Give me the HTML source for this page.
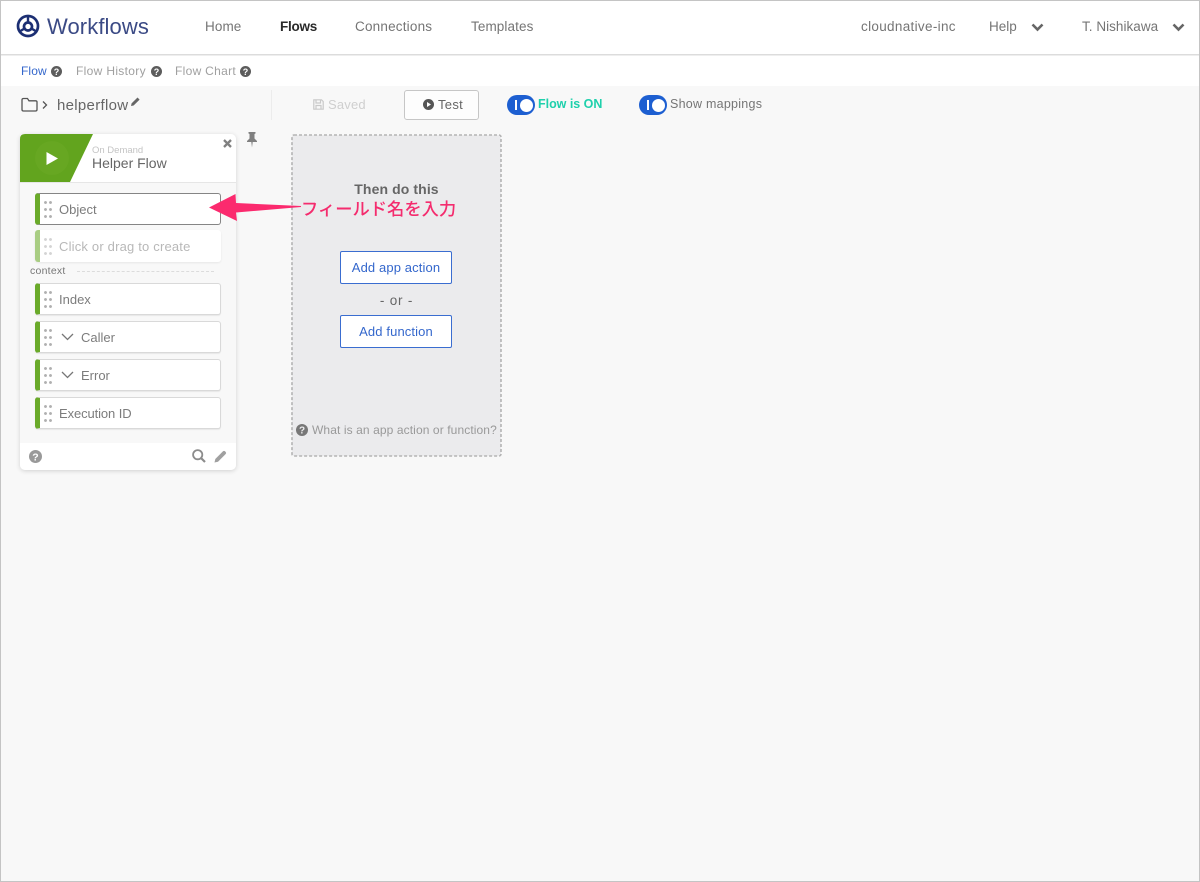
<!DOCTYPE html>
<html lang="ja"><head><meta charset="utf-8"><title>Workflows</title>
<style>
*{box-sizing:border-box}
html,body{margin:0;padding:0}
body{width:1200px;height:882px;position:relative;overflow:hidden;background:#f8f8f8;font-family:"Liberation Sans","Noto Sans CJK JP",sans-serif;color:#666}
.t{position:absolute;white-space:nowrap;line-height:16px}
.abs{position:absolute}
.field{position:absolute;left:35px;width:186px;background:#fff;border:1px solid #d9d9d9;border-left:5px solid #6aaa2a;border-radius:3px;box-shadow:0 1px 1px rgba(0,0,0,.07)}
.dots{position:absolute;left:3px;top:5px;width:10px;height:21px;background-image:radial-gradient(circle,#b0b0b0 1.2px,transparent 1.7px);background-size:5px 7px;background-position:0 0}
.ft{font-size:13px;color:#7c7c7c}
.btn{position:absolute;left:340px;width:112px;height:33px;background:#fff;border:1px solid #3a6dd0;border-radius:2px;color:#3467cc;font-size:13px;text-align:center;line-height:31px;letter-spacing:.12px}
</style></head>
<body>
<!-- header -->
<div class="abs" style="left:0;top:0;width:1200px;height:55px;background:#fff;border-bottom:1px solid #dcdcdc;box-shadow:0 1px 1px rgba(0,0,0,.05)"></div>
<div class="abs" style="left:0;top:56px;width:1200px;height:30px;background:#fff"></div>

<svg class="abs" style="left:16px;top:14px" width="24" height="24" viewBox="0 0 24 24" fill="none" stroke="#1c2f73" stroke-width="2.700"><circle cx="12" cy="12" r="10"/><circle cx="12" cy="12.500" r="4"/><path d="M12 8.500V2.500M8.500 14.500 3.600 17.500M15.500 14.500l4.900 3" stroke-width="2.400"/></svg>
<div class="t" style="left:47px;top:13px;font-size:22px;line-height:28px;color:#3b4a85;letter-spacing:.1px">Workflows</div>
<div class="t" style="left:205px;top:19px;font-size:13.500px;color:#757575;letter-spacing:.1px">Home</div>
<div class="t" style="left:280px;top:19px;font-size:13.500px;color:#2a2a2a;font-weight:bold;letter-spacing:-.25px">Flows</div>
<div class="t" style="left:355px;top:19px;font-size:13.500px;color:#757575;letter-spacing:.2px">Connections</div>
<div class="t" style="left:471px;top:19px;font-size:13.500px;color:#757575;letter-spacing:.1px">Templates</div>
<div class="t" style="left:861px;top:19px;font-size:13.500px;color:#757575;letter-spacing:.32px">cloudnative-inc</div>
<div class="t" style="left:989px;top:19px;font-size:13.500px;color:#757575">Help</div>
<svg class="abs" style="left:1031px;top:23px" width="13" height="9" viewBox="0 0 13 9" fill="none" stroke="#666" stroke-width="2.600"><path d="M1.500 1.500 6.500 6.500 11.500 1.500"/></svg>
<div class="t" style="left:1082px;top:19px;font-size:13.500px;color:#757575;letter-spacing:.03px">T. Nishikawa</div>
<svg class="abs" style="left:1172px;top:23px" width="13" height="9" viewBox="0 0 13 9" fill="none" stroke="#666" stroke-width="2.600"><path d="M1.500 1.500 6.500 6.500 11.500 1.500"/></svg>

<!-- subnav -->
<div class="t" style="left:21px;top:63px;font-size:12px;color:#3467cc;letter-spacing:.1px">Flow</div>
<svg class="abs" style="left:51px;top:66px" width="11" height="11" viewBox="0 0 11 11"><circle cx="5.500" cy="5.500" r="5.500" fill="#5c5c5c"/><text x="5.500" y="9" font-size="9" font-weight="bold" text-anchor="middle" fill="#fff" font-family="Liberation Sans">?</text></svg>
<div class="t" style="left:76px;top:63px;font-size:12px;color:#a0a0a0;letter-spacing:.33px">Flow History</div>
<svg class="abs" style="left:151px;top:66px" width="11" height="11" viewBox="0 0 11 11"><circle cx="5.500" cy="5.500" r="5.500" fill="#5c5c5c"/><text x="5.500" y="9" font-size="9" font-weight="bold" text-anchor="middle" fill="#fff" font-family="Liberation Sans">?</text></svg>
<div class="t" style="left:175px;top:63px;font-size:12px;color:#a0a0a0;letter-spacing:.3px">Flow Chart</div>
<svg class="abs" style="left:240px;top:66px" width="11" height="11" viewBox="0 0 11 11"><circle cx="5.500" cy="5.500" r="5.500" fill="#5c5c5c"/><text x="5.500" y="9" font-size="9" font-weight="bold" text-anchor="middle" fill="#fff" font-family="Liberation Sans">?</text></svg>

<!-- toolbar -->
<svg class="abs" style="left:21px;top:97px" width="28" height="16" viewBox="0 0 28 16" fill="none" stroke="#555" stroke-width="1.300"><path d="M1 3V12.500Q1 14 2.500 14H14.500Q16 14 16 12.500V5Q16 3.800 14.500 3.800H8L6.500 1.500H2.500Q1 1.500 1 3Z"/><path d="M22 4.500 25.500 8 22 11.500"/></svg>
<div class="t" style="left:57px;top:97px;font-size:15px;line-height:18px;color:#666;letter-spacing:.3px">helperflow</div>
<svg class="abs" style="left:130px;top:96px" width="11" height="11" viewBox="0 0 11 11"><path d="M1 10 1.600 7.400 7.500 1.500 9.600 3.600 3.600 9.500Z" fill="#666"/></svg>
<div class="abs" style="left:271px;top:90px;width:1px;height:30px;background:#ececec"></div>
<svg class="abs" style="left:313px;top:99px" width="11" height="11" viewBox="0 0 11 11" fill="none" stroke="#c9c9c9" stroke-width="1.200"><path d="M.8.800H8.500L10.200 2.500V10.200H.8Z"/><path d="M3 1V4H7.500V1M3 10V6.500H8V10"/></svg>
<div class="t" style="left:328px;top:97px;font-size:13px;color:#cfcfcf;letter-spacing:.2px">Saved</div>
<div class="abs" style="left:404px;top:90px;width:75px;height:30px;background:#fdfdfd;border:1px solid #c6c6c6;border-radius:3px"></div>
<svg class="abs" style="left:423px;top:99px" width="11" height="11" viewBox="0 0 11 11"><circle cx="5.500" cy="5.500" r="5.500" fill="#555"/><path d="M4 3 8 5.500 4 8Z" fill="#fff"/></svg>
<div class="t" style="left:438px;top:97px;font-size:13px;color:#666;letter-spacing:.3px">Test</div>

<div class="abs" style="left:507px;top:95px;width:28px;height:20px;border-radius:10px;background:#1d5fd1"></div>
<div class="abs" style="left:515px;top:100px;width:2px;height:10px;background:#fff"></div>
<div class="abs" style="left:520px;top:99px;width:13px;height:13px;border-radius:50%;background:#fff"></div>
<div class="t" style="left:538px;top:96px;font-size:12.500px;font-weight:bold;color:#1fd0ac;letter-spacing:-.02px">Flow is ON</div>
<div class="abs" style="left:639px;top:95px;width:28px;height:20px;border-radius:10px;background:#1d5fd1"></div>
<div class="abs" style="left:647px;top:100px;width:2px;height:10px;background:#fff"></div>
<div class="abs" style="left:652px;top:99px;width:13px;height:13px;border-radius:50%;background:#fff"></div>
<div class="t" style="left:670px;top:96px;font-size:12.500px;color:#757575;letter-spacing:.25px">Show mappings</div>

<!-- trigger card -->
<div class="abs" style="left:20px;top:134px;width:216px;height:336px;background:#f8f8f8;border-radius:5px;box-shadow:0 1px 5px rgba(0,0,0,.16)"></div>
<div class="abs" style="left:20px;top:134px;width:216px;height:49px;background:#fff;border-radius:5px 5px 0 0;border-bottom:1px solid #e6e6e6"></div>
<svg class="abs" style="left:20px;top:134px" width="73" height="48" viewBox="0 0 73 48"><path d="M0 5Q0 0 5 0H73L50 48H0Z" fill="#62a41e"/><circle cx="32" cy="24" r="17" fill="#67a722"/><path d="M26.500 18 38 24.500 26.500 31Z" fill="#fff"/></svg>
<div class="t" style="left:92px;top:143px;font-size:9.500px;color:#c4c4c4">On Demand</div>
<div class="t" style="left:92px;top:155px;font-size:14px;color:#666;letter-spacing:0">Helper Flow</div>
<svg class="abs" style="left:223px;top:139px" width="9" height="9" viewBox="0 0 9 9" stroke="#808080" stroke-width="2.300"><path d="M1 1 8 8M8 1 1 8"/></svg>
<svg class="abs" style="left:246px;top:132px" width="12" height="16" viewBox="0 0 12 16" fill="#808080"><path d="M2.500 0H9.500V1.500L8.500 2V6.500L11 9V10H6.700L6 15.500 5.300 10H1V9L3.500 6.500V2L2.500 1.500Z"/></svg>

<div class="field" style="top:193px;height:32px;border:1px solid #858585;border-left:5px solid #6aaa2a;box-shadow:none"><div class="dots"></div></div>
<div class="t ft" style="left:59px;top:202px">Object</div>

<div class="field" style="top:230px;height:32px;border:none;border-left:5px solid #a9cd83;box-shadow:0 1px 2px rgba(0,0,0,.07)"><div class="dots" style="opacity:.55;top:6px"></div></div>
<div class="t ft" style="left:59px;top:239px;color:#b8b8b8;letter-spacing:.19px">Click or drag to create</div>

<div class="t" style="left:30px;top:263px;font-size:10.500px;color:#777;letter-spacing:.25px">context</div>
<div class="abs" style="left:77px;top:271px;width:137px;border-top:1px dashed #dcdcdc"></div>

<div class="field" style="top:283px;height:32px"><div class="dots"></div></div>
<div class="t ft" style="left:59px;top:292px">Index</div>

<div class="field" style="top:321px;height:32px"><div class="dots"></div></div>
<svg class="abs" style="left:61px;top:333px" width="13" height="8" viewBox="0 0 13 8" fill="none" stroke="#777" stroke-width="1.300"><path d="M1 1 6.500 6.500 12 1"/></svg>
<div class="t ft" style="left:81px;top:330px">Caller</div>

<div class="field" style="top:359px;height:32px"><div class="dots"></div></div>
<svg class="abs" style="left:61px;top:371px" width="13" height="8" viewBox="0 0 13 8" fill="none" stroke="#777" stroke-width="1.300"><path d="M1 1 6.500 6.500 12 1"/></svg>
<div class="t ft" style="left:81px;top:368px">Error</div>

<div class="field" style="top:397px;height:32px"><div class="dots"></div></div>
<div class="t ft" style="left:59px;top:406px;letter-spacing:-.1px">Execution ID</div>

<div class="abs" style="left:20px;top:443px;width:216px;height:27px;background:#fff;border-radius:0 0 5px 5px"></div>
<svg class="abs" style="left:29px;top:450px" width="13" height="13" viewBox="0 0 13 13"><circle cx="6.500" cy="6.500" r="6.500" fill="#999"/><text x="6.500" y="10.500" font-size="10.500" font-weight="bold" text-anchor="middle" fill="#fff" font-family="Liberation Sans">?</text></svg>
<svg class="abs" style="left:192px;top:449px" width="14" height="14" viewBox="0 0 14 14" fill="none" stroke="#8c8c8c" stroke-width="1.800"><circle cx="5.700" cy="5.700" r="4.600"/><path d="M9 9 13 13" stroke-width="2.200"/></svg>
<svg class="abs" style="left:214px;top:450px" width="13" height="13" viewBox="0 0 13 13"><path d="M.5 12.500 1.300 9 9 1.300Q10 .4 11 1.300L11.700 2Q12.600 3 11.700 4L4 11.700Z" fill="#a0a0a0"/></svg>

<!-- action card -->
<svg class="abs" style="left:291px;top:134px" width="211" height="323" viewBox="0 0 211 323"><rect x="1" y="1" width="209" height="321" rx="2" fill="#ebebed" stroke="#b4b4b4" stroke-width="1.600" stroke-dasharray="3 2"/></svg>
<div class="t" style="left:291px;width:211px;text-align:center;top:181px;font-size:14px;font-weight:bold;color:#666;letter-spacing:.1px">Then do this</div>
<div class="btn" style="top:251px">Add app action</div>
<div class="t" style="left:291px;width:211px;text-align:center;top:293px;font-size:13.500px;color:#666;letter-spacing:.8px">- or -</div>
<div class="btn" style="top:315px">Add function</div>
<svg class="abs" style="left:296px;top:424px" width="12" height="12" viewBox="0 0 12 12"><circle cx="6" cy="6" r="6" fill="#777"/><text x="6" y="9.700" font-size="10" font-weight="bold" text-anchor="middle" fill="#ebebed" font-family="Liberation Sans">?</text></svg>
<div class="t" style="left:312px;top:422px;font-size:12px;color:#999;letter-spacing:.1px">What is an app action or function?</div>

<!-- annotation -->
<svg class="abs" style="left:205px;top:190px" width="100" height="36" viewBox="0 0 100 36"><path d="M4 17.500 30.500 4 31 13 96 16V17L31 22.500 32 31Z" fill="#fb2a6e"/></svg>
<div class="t" style="left:301px;top:198px;font-size:17.300px;line-height:20px;font-weight:500;color:#f42c6e;font-family:'Noto Sans CJK JP','Liberation Sans',sans-serif">フィールド名を入力</div>

<!-- window frame -->
<div class="abs" style="left:0;top:0;width:1200px;height:882px;border:1px solid #c4c4c4;pointer-events:none"></div>
</body></html>
